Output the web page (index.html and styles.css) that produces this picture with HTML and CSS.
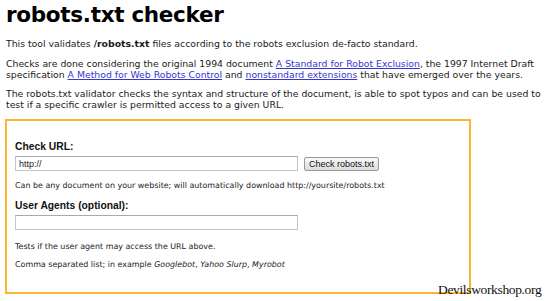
FILE: index.html
```html
<!DOCTYPE html>
<html>
<head>
<meta charset="utf-8">
<link rel="stylesheet" href="styles.css">
</head>
<body>
<div class="page">
  <h1 class="title">robots.txt checker</h1>
  <p class="para p1">This tool validates <b>/robots.txt</b> files according to the robots exclusion de-facto standard.</p>
  <p class="para p2">Checks are done considering the original 1994 document <a href="#">A Standard for Robot Exclusion</a>, the 1997 Internet Draft specification <a href="#">A Method for Web Robots Control</a> and <a href="#">nonstandard extensions</a> that have emerged over the years.</p>
  <p class="para p3">The robots.txt validator checks the syntax and structure of the document, is able to spot typos and can be used to test if a specific crawler is permitted access to a given URL.</p>
  <form class="box">
    <div class="label">Check URL:</div>
    <div class="row">
      <input class="field" type="text" value="http://">
      <button class="btn" type="button">Check robots.txt</button>
    </div>
    <div class="hint h1">Can be any document on your website; will automatically download http://yoursite/robots.txt</div>
    <div class="label l2">User Agents (optional):</div>
    <div class="row">
      <input class="field" type="text" value="">
    </div>
    <div class="hint h2">Tests if the user agent may access the URL above.</div>
    <div class="hint h3">Comma separated list; in example <i>Googlebot</i>, <i>Yahoo Slurp</i>, <i>Myrobot</i></div>
  </form>
</div>
<div class="watermark">Devilsworkshop.org</div>
</body>
</html>
```
FILE: styles.css
```css
html, body {
  margin: 0;
  padding: 0;
  background: #fff;
}
body {
  position: relative;
  width: 550px;
  height: 301px;
  overflow: hidden;
  font-family: "DejaVu Sans", Verdana, sans-serif;
  color: #111;
}
.page {
  padding: 0 6px;
}
.title {
  margin: 0;
  padding-top: 2px;
  font-family: "DejaVu Sans", Verdana, sans-serif;
  font-weight: bold;
  font-size: 21.5px;
  line-height: 26px;
  color: #000;
  letter-spacing: -0.3px;
}
.para {
  margin: 0;
  font-size: 9.3px;
  line-height: 11px;
  color: #1a1a1a;
}
.p1 { margin-top: 10px; }
.p2 { margin-top: 9px; }
.p3 { margin-top: 8px; }
.para a {
  color: #3535d0;
  text-decoration: underline;
}
.box {
  display: block;
  margin-top: 9px;
  width: 446px;
  height: 152px;
  border: 2px solid #fdb431;
  padding: 19px 8px 0 8px;
  margin-left: -1px;
}
.label {
  font-family: "Liberation Sans", Arial, sans-serif;
  font-weight: bold;
  font-size: 10.3px;
  line-height: 13px;
  color: #111;
}
.l2 { margin-top: 8px; }
.row {
  display: flex;
  align-items: center;
  gap: 6px;
  margin-top: 3px;
}
.field {
  box-sizing: border-box;
  width: 283px;
  height: 15px;
  margin: 0;
  padding: 0 3px;
  border: 1px solid #c5c5c5;
  border-top-color: #a9a9a9;
  font-family: "Liberation Sans", Arial, sans-serif;
  font-size: 9px;
  color: #222;
  background: #fff;
}
.btn {
  box-sizing: border-box;
  height: 14px;
  margin: 0;
  padding: 0 4px;
  border: 1px solid #9a9a9a;
  border-radius: 2px;
  background: linear-gradient(#fafafa, #dcdcdc);
  font-family: "Liberation Sans", Arial, sans-serif;
  font-size: 9px;
  line-height: 12px;
  color: #111;
}
.hint {
  font-size: 7.95px;
  line-height: 10px;
  color: #222;
}
.h1 { margin-top: 10px; }
.h2 { margin-top: 12px; }
.h3 { margin-top: 8px; }
.watermark {
  position: absolute;
  left: 438px;
  top: 281px;
  font-family: "Liberation Serif", "Times New Roman", serif;
  font-size: 13.5px;
  line-height: 17px;
  letter-spacing: -0.35px;
  color: #111;
}
```
